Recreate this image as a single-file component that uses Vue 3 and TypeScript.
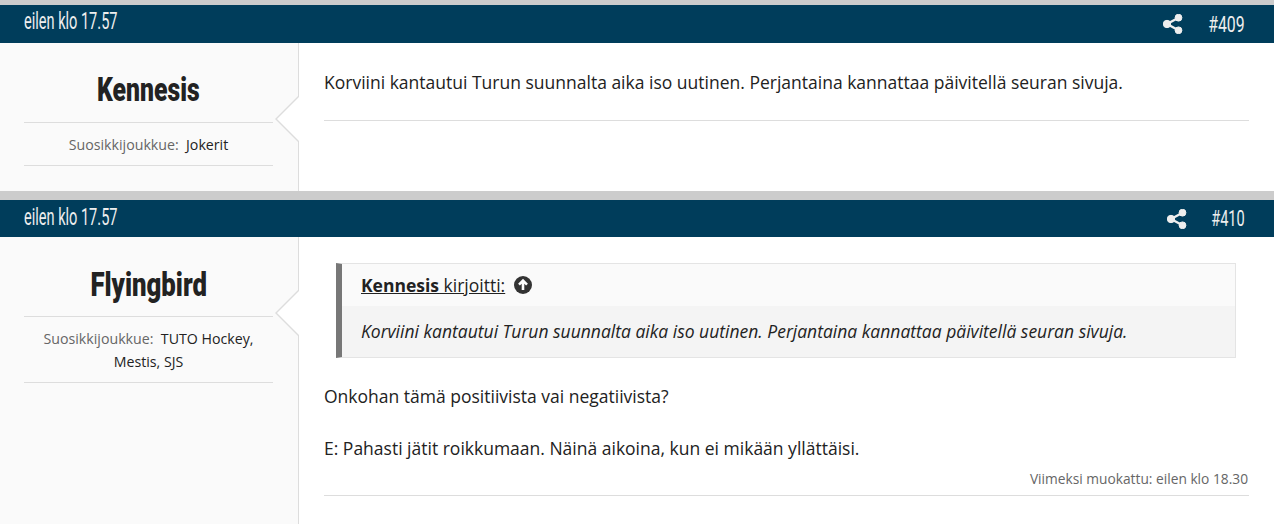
<script setup lang="ts">
const quote = 'Korviini kantautui Turun suunnalta aika iso uutinen. Perjantaina kannattaa päivitellä seuran sivuja.'
</script>

<template>
  <div class="page">
    <article class="post first">
      <header class="bar">
        <span class="cond date">eilen klo 17.57</span>
        <span class="right">
          <svg class="share" viewBox="0 0 20 20" width="20" height="20"><circle cx="15.5" cy="3.7" r="3.4"/><circle cx="15.5" cy="16.3" r="3.4"/><circle cx="4" cy="10" r="3.7"/><path d="M4 10 15.5 3.7M4 10l11.5 6.3" stroke-width="2.4"/></svg>
          <span class="cond num">#409</span>
        </span>
      </header>
      <div class="body">
        <aside class="side">
          <h2 class="name"><span class="cond-b">Kennesis</span></h2>
          <p class="team"><span class="label">Suosikkijoukkue:</span>&nbsp; Jokerit</p>
          <i class="arrow"></i>
        </aside>
        <main class="content">
          <p class="txt">{{ quote }}</p>
          <div class="rule"></div>
        </main>
      </div>
    </article>
    <article class="post second">
      <header class="bar">
        <span class="cond date">eilen klo 17.57</span>
        <span class="right">
          <svg class="share" viewBox="0 0 20 20" width="20" height="20"><circle cx="15.5" cy="3.7" r="3.4"/><circle cx="15.5" cy="16.3" r="3.4"/><circle cx="4" cy="10" r="3.7"/><path d="M4 10 15.5 3.7M4 10l11.5 6.3" stroke-width="2.4"/></svg>
          <span class="cond num n410">#410</span>
        </span>
      </header>
      <div class="body">
        <aside class="side">
          <h2 class="name"><span class="cond-b wide">Flyingbird</span></h2>
          <p class="team"><span class="label">Suosikkijoukkue:</span>&nbsp; TUTO Hockey, Mestis, SJS</p>
          <i class="arrow"></i>
        </aside>
        <main class="content">
          <blockquote class="quote">
            <div class="qhead">
              <a class="qlink"><b>Kennesis</b> kirjoitti:</a>
              <svg class="up" viewBox="0 0 18 18" width="18" height="18"><circle cx="9" cy="9" r="9" fill="#333"/><path d="M9 14V5M5 8.6 9 4.6l4 4" fill="none" stroke="#fff" stroke-width="2.6"/></svg>
            </div>
            <div class="qbody">{{ quote }}</div>
          </blockquote>
          <p class="txt t2">Onkohan tämä positiivista vai negatiivista?</p>
          <p class="txt t3">E: Pahasti jätit roikkumaan. Näinä aikoina, kun ei mikään yllättäisi.</p>
          <p class="edit">Viimeksi muokattu: eilen klo 18.30</p>
          <div class="rule"></div>
        </main>
      </div>
    </article>
  </div>
</template>

<style>
html, body { margin: 0; background: #fff; overflow: hidden; }
</style>

<style scoped>
.page {
  width: 1274px;
  height: 524px;
  overflow: hidden;
  font-family: "Open Sans", sans-serif;
  font-size: 17.5px;
  color: #222;
}
.post { border-top: 5px solid #ccc; }
.second { border-top-width: 9px; }
.bar {
  height: 38px;
  background: #003d5b;
  color: #eee;
  display: flex;
  align-items: center;
  justify-content: space-between;
  padding: 0 29px 0 24px;
}
.second .bar { height: 37px; }
.right { display: flex; align-items: center; gap: 25px; }
.share { fill: #eee; stroke: #eee; }
.cond, .cond-b {
  display: inline-block;
  font-family: Roboto, sans-serif;
  white-space: nowrap;
}
.cond { font-size: 22px; transform: scaleX(0.72); }
.date { font-size: 24px; transform: scaleX(0.606); transform-origin: left center; margin-bottom: 6px; }
.second .date { margin-bottom: 3px; }
.num { transform-origin: right center; margin-left: -14px; }
.n410 { transform: scaleX(0.66); margin-left: -18px; }
.cond-b { font-weight: 900; font-size: 33px; transform: scaleX(0.75); }
.wide { transform: scaleX(0.78); }
.body { display: flex; }
.first .body { height: 148px; }
.second .body { height: 287px; }
.side {
  background: #fafafa;
  border-right: 1px solid #ddd;
  padding: 0 25px 0 24px;
  box-sizing: border-box;
  width: 299px;
  position: relative;
}
.name {
  margin: 0;
  height: 79px;
  line-height: 92px;
  text-align: center;
  font-size: 33px;
  border-bottom: 1px solid #ddd;
  overflow: hidden;
  white-space: nowrap;
}
.second .name { line-height: 93px; }
.team {
  margin: 0;
  padding: 10px 0 9px;
  font-size: 14.2px;
  line-height: 23px;
  text-align: center;
  border-bottom: 1px solid #ddd;
  color: #222;
}
.label { color: #666; }
.arrow {
  position: absolute;
  right: -1px;
  top: 52px;
  width: 24px;
  height: 48px;
  background: #ddd;
  clip-path: polygon(100% 0, 0 50%, 100% 100%);
}
.arrow::after {
  content: "";
  position: absolute;
  inset: 0;
  background: #fff;
  clip-path: polygon(100% 2px, 2px 50%, 100% calc(100% - 2px));
}
.content { flex: 1; padding: 0 25px; min-width: 0; }
.txt { margin: 0; font-size: 17.5px; line-height: 26px; }
.first .txt { padding: 26px 0 25px; }
.rule { height: 1px; background: #ddd; }
.quote {
  margin: 26px 13px 0 12px;
  border: 1px solid #e4e4e4;
  border-left: 6px solid #777;
  background: #f4f4f4;
}
.qhead {
  height: 42px;
  background: #fafafa;
  padding-left: 19px;
  display: flex;
  align-items: center;
  gap: 9px;
  font-size: 17.5px;
}
.qlink { text-decoration: underline; color: #222; }
.qlink b { font-weight: 700; }
.qbody { font-style: italic; font-size: 17.5px; line-height: 26px; padding: 12px 19px 13px; height: 26px; }
.t2 { margin-top: 25px; }
.t3 { margin-top: 26px; }
.edit {
  margin: 8px 0 0;
  padding: 0 1px 7px 0;
  text-align: right;
  font-size: 13.75px;
  line-height: 19px;
  color: #666;
}
</style>
